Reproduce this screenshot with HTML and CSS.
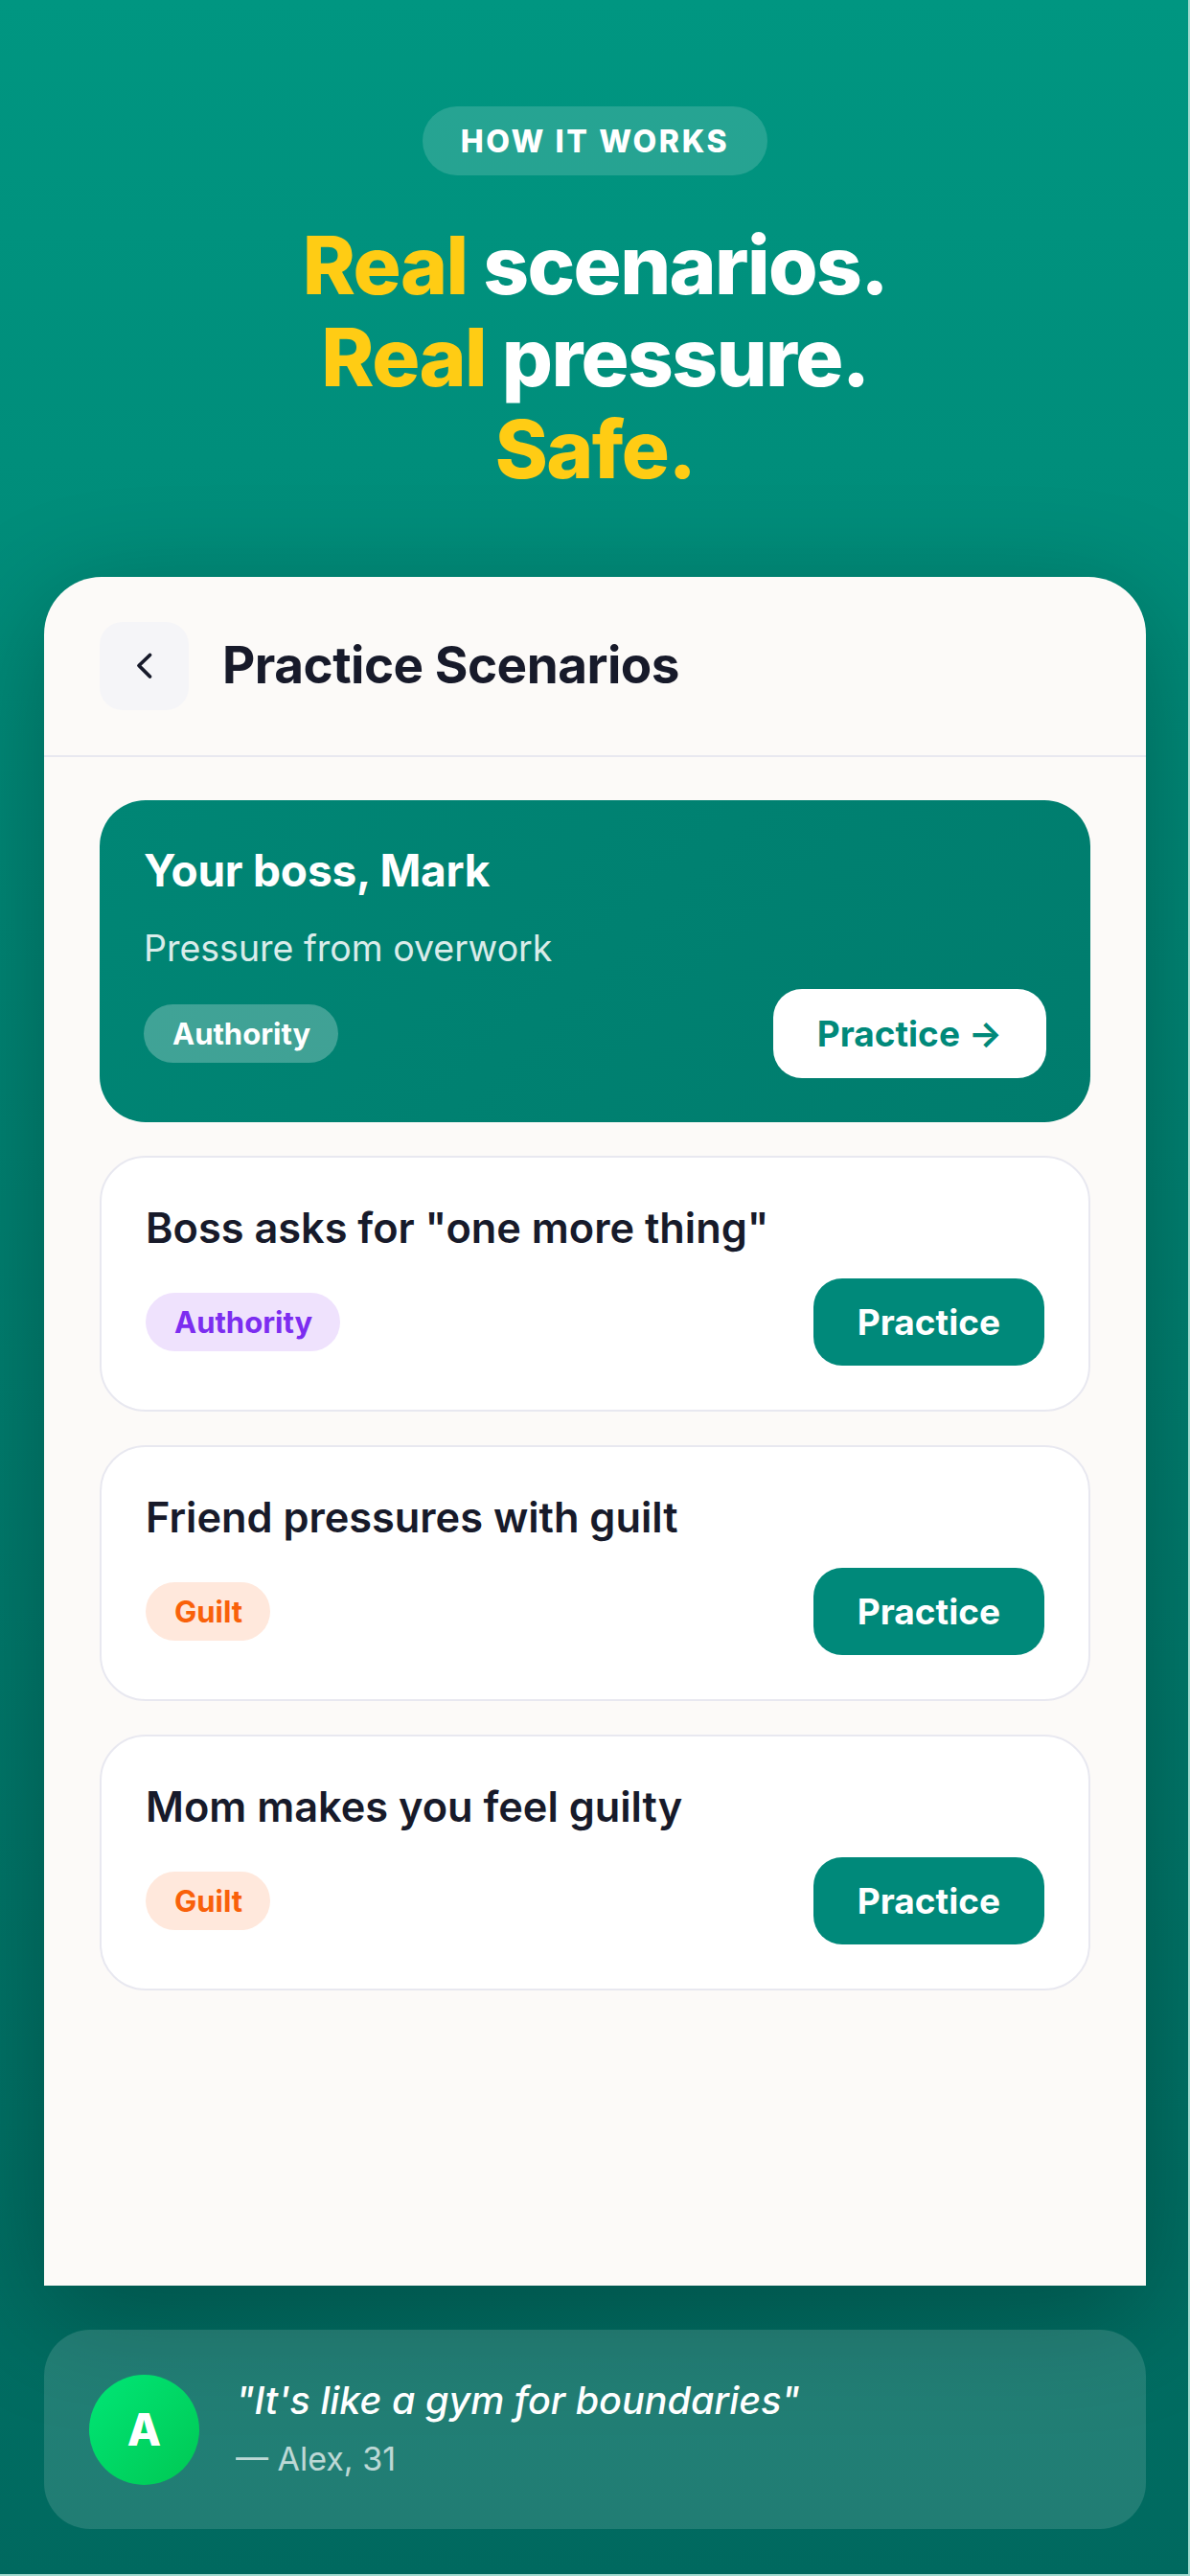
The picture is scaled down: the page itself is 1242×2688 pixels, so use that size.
FILE: index.html
```html
<!DOCTYPE html>
<html lang="en">
<head>
    <meta charset="UTF-8">
    <title>Practice Scenarios</title>
    <link rel="stylesheet" href="styles.css">
</head>
<body>
    <div class="page">
        <div class="hero">
            <span class="eyebrow">HOW IT WORKS</span>
            <h1><em>Real</em> scenarios.<br><em>Real</em> pressure.<br><em>Safe.</em></h1>
        </div>

        <div class="phone">
            <div class="phone-head">
                <div class="back">
                    <svg width="30" height="30" viewBox="0 0 30 30" fill="none"><path d="M20.5 3.5 L9 14.5 L20.5 26" stroke="#171a2a" stroke-width="3.8" stroke-linecap="round" stroke-linejoin="round"/></svg>
                </div>
                <h2>Practice Scenarios</h2>
            </div>
            <div class="list">
                <div class="featured">
                    <div class="featured-name">Your boss, Mark</div>
                    <div class="featured-sub">Pressure from overwork</div>
                    <div class="row">
                        <span class="tag tag-glass">Authority</span>
                        <span class="btn btn-white">Practice →</span>
                    </div>
                </div>
                <div class="item">
                    <div class="item-name">Boss asks for "one more thing"</div>
                    <div class="row">
                        <span class="tag tag-purple">Authority</span>
                        <span class="btn">Practice</span>
                    </div>
                </div>
                <div class="item">
                    <div class="item-name">Friend pressures with guilt</div>
                    <div class="row">
                        <span class="tag tag-orange">Guilt</span>
                        <span class="btn">Practice</span>
                    </div>
                </div>
                <div class="item">
                    <div class="item-name">Mom makes you feel guilty</div>
                    <div class="row">
                        <span class="tag tag-orange">Guilt</span>
                        <span class="btn">Practice</span>
                    </div>
                </div>
            </div>
        </div>

        <div class="quote">
            <div class="avatar">A</div>
            <div>
                <div class="quote-text">"It's like a gym for boundaries"</div>
                <div class="quote-by">— Alex, 31</div>
            </div>
        </div>
    </div>
</body>
</html>
```

FILE: styles.css
```css
* {
    margin: 0;
    padding: 0;
    box-sizing: border-box;
}

body {
    font-family: Inter, "Liberation Sans", sans-serif;
    color: #171a2a;
    background: #a3dcd0;
}

.page {
    width: 1240px;
    height: 2686px;
    display: flex;
    flex-direction: column;
    padding: 111px 44px 47px 46px;
    background: linear-gradient(180deg, #009681 0%, #00695f 100%);
    overflow: hidden;
}

.hero {
    display: flex;
    flex-direction: column;
    align-items: center;
    height: 491px;
}

.eyebrow {
    height: 72px;
    padding: 0 40px;
    display: flex;
    align-items: center;
    border-radius: 36px;
    background: rgba(255, 255, 255, 0.15);
    color: #fff;
    font-size: 32px;
    font-weight: 800;
    letter-spacing: 2.6px;
}

h1 {
    margin-top: 46px;
    color: #fff;
    font-size: 83.5px;
    line-height: 96px;
    font-weight: 850;
    text-align: center;
    letter-spacing: -1.6px;
}

h1 em {
    font-style: normal;
    color: #ffcc14;
}

.phone {
    flex: 1;
    background: #fcfaf8;
    border-radius: 60px 60px 0 0;
    box-shadow: 0 30px 120px rgba(0, 0, 0, 0.28);
}

.phone-head {
    height: 188px;
    padding: 47px 58px 0;
    display: flex;
    align-items: flex-start;
    gap: 35px;
    border-bottom: 2px solid #e8e8f0;
}

.back {
    width: 93px;
    height: 92px;
    border-radius: 24px;
    background: #f5f5f8;
    display: flex;
    align-items: center;
    justify-content: center;
}

h2 {
    font-size: 53px;
    font-weight: 700;
    line-height: 90px;
    letter-spacing: -0.5px;
}

.list {
    padding: 45px 58px 0;
    display: flex;
    flex-direction: column;
    gap: 35px;
}

.featured {
    height: 336px;
    padding: 45px 46px 0 46px;
    border-radius: 48px;
    background: linear-gradient(135deg, #008675, #007c6d);
    color: #fff;
}

.featured-name {
    font-size: 46px;
    line-height: 56px;
    font-weight: 700;
    letter-spacing: -0.2px;
}

.featured-sub {
    margin-top: 31px;
    font-size: 37.5px;
    line-height: 46px;
    opacity: 0.85;
}

.row {
    display: flex;
    align-items: center;
    justify-content: space-between;
}

.featured .row {
    margin-top: 19px;
}

.tag {
    height: 61px;
    padding: 0 29px 0 30px;
    display: flex;
    align-items: center;
    border-radius: 31px;
    font-size: 31px;
    font-weight: 700;
}

.tag-glass {
    background: rgba(255, 255, 255, 0.25);
    color: #fff;
}

.tag-purple {
    background: #efe2fd;
    color: #7c2df0;
}

.tag-orange {
    background: #ffe8dc;
    color: #f9610a;
}

.btn {
    height: 91px;
    padding: 0 46px;
    display: flex;
    align-items: center;
    border-radius: 30px;
    background: #00897a;
    color: #fff;
    font-size: 37px;
    font-weight: 650;
}

.btn-white {
    height: 93px;
    padding: 0 46px;
    background: #fff;
    color: #00897a;
}

.item {
    height: 267px;
    padding: 46px 46px 0 46px;
    border: 2px solid #e8e8f0;
    border-radius: 48px;
    background: #fff;
}

.item-name {
    font-size: 43.3px;
    line-height: 54px;
    font-weight: 600;
}

.item .row {
    margin-top: 26px;
}

.quote {
    margin-top: 46px;
    height: 208px;
    padding: 0 47px;
    display: flex;
    align-items: center;
    gap: 38px;
    border-radius: 48px;
    background: rgba(255, 255, 255, 0.13);
    color: #fff;
}

.avatar {
    width: 115px;
    height: 115px;
    flex: none;
    border-radius: 50%;
    background: linear-gradient(135deg, #00e676, #00c853);
    display: flex;
    align-items: center;
    justify-content: center;
    font-size: 46px;
    font-weight: 800;
}

.quote-text {
    font-size: 39.5px;
    line-height: 52px;
    font-style: italic;
    font-weight: 500;
}

.quote-by {
    margin: 15px 0 5px;
    font-size: 34px;
    line-height: 40px;
    opacity: 0.7;
}
```
